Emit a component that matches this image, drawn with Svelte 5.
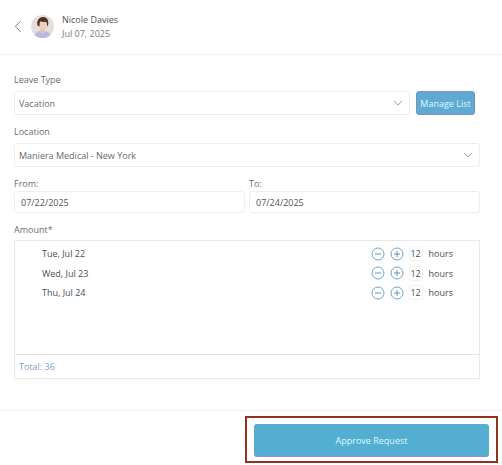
<script>
  const days = ['Tue, Jul 22', 'Wed, Jul 23', 'Thu, Jul 24'];
  const total = 36;
</script>

{#snippet chevron()}
  <svg class="chevron" viewBox="0 0 10 6" width="10" height="6">
    <path d="M1 .8 5 5l4-4.2" fill="none" stroke="#8d9296" stroke-width=".9" />
  </svg>
{/snippet}

<div class="page">
  <header>
    <svg class="back" viewBox="0 0 9 14" width="8" height="13">
      <path d="M7.6 1 1.4 7l6.2 6" fill="none" stroke="#777c80" stroke-width="1.1" />
    </svg>
    <svg class="avatar" viewBox="0 0 24 24" width="23" height="23">
      <defs><clipPath id="round"><circle cx="12" cy="12" r="12" /></clipPath></defs>
      <g clip-path="url(#round)">
        <rect width="24" height="24" fill="#e4dfdb" />
        <path d="M3 24c0-5 4-7.500 9-7.500s9 2.500 9 7.500z" fill="#bdb6e0" />
        <path d="M9.500 13h5v5.500c-1.500 1-3.500 1-5 0z" fill="#e6c4b2" />
        <ellipse cx="12.500" cy="10" rx="4.200" ry="5.500" fill="#edcfbd" />
        <path d="M6.500 10c-.5-5 2.500-8 6-8s6 2.500 5.500 7c-.2 1.500-.8 2.500-1.300 3 .2-2 0-4-1-5-2 .5-4.500.5-6-.5-.7 1.500-1 3.500-.7 5.500-1.300-.3-2.300-1-2.500-2z" fill="#4f3428" />
      </g>
    </svg>
    <div class="who">
      <span class="name">Nicole Davies</span>
      <span class="date">Jul 07, 2025</span>
    </div>
  </header>

  <main>
    <label class="first" for="leave">Leave Type</label>
    <div class="with-button">
      <div class="field grow" id="leave">Vacation {@render chevron()}</div>
      <button class="manage">Manage List</button>
    </div>

    <label for="location">Location</label>
    <div class="field" id="location">Maniera Medical - New York {@render chevron()}</div>

    <div class="dates">
      <div>
        <label for="from">From:</label>
        <div class="field date-field" id="from">07/22/2025</div>
      </div>
      <div>
        <label for="to">To:</label>
        <div class="field date-field" id="to">07/24/2025</div>
      </div>
    </div>

    <label class="amount-label" for="amount">Amount*</label>
    <div class="amount" id="amount">
      <ul>
        {#each days as day}
          <li>
            <span class="day">{day}</span>
            <svg class="step" viewBox="0 0 14 14" width="14" height="14">
              <circle cx="7" cy="7" r="6" fill="none" stroke="#6fa5cf" />
              <path d="M4 7h6" stroke="#6f8fa8" />
            </svg>
            <svg class="step" viewBox="0 0 14 14" width="14" height="14">
              <circle cx="7" cy="7" r="6" fill="none" stroke="#6fa5cf" />
              <path d="M4 7h6M7 4v6" stroke="#6f8fa8" />
            </svg>
            <span class="qty">12</span>
            <span class="unit">hours</span>
          </li>
        {/each}
      </ul>
      <div class="total">Total: {total}</div>
    </div>
  </main>

  <footer>
    <div class="highlight">
      <button class="approve">Approve Request</button>
    </div>
  </footer>
</div>

<style>
  :global(body) {
    background: #fff;
  }

  .page {
    width: 502px;
    height: 465px;
    overflow: hidden;
    font-family: "Open Sans", "Noto Sans", sans-serif;
    font-size: 9px;
    color: #5f6468;
  }

  header {
    height: 55px;
    box-sizing: border-box;
    border-bottom: 1px solid #f1f1f1;
    display: flex;
    align-items: center;
    padding: 0 0 1px 14px;
  }

  .back {
    margin-right: 9px;
  }

  .avatar {
    margin-right: 8px;
  }

  .who {
    display: flex;
    flex-direction: column;
    gap: 3px;
    line-height: 11px;
  }

  .name {
    color: #4d5256;
  }

  .date {
    color: #74797d;
  }

  main {
    padding: 0 22px 0 14px;
  }

  label {
    display: block;
    line-height: 12px;
    margin: 11px 0 5px;
    color: #686d71;
  }

  label.first {
    margin-top: 19px;
  }

  .with-button {
    display: flex;
    gap: 6px;
    padding-right: 5px;
  }

  .grow {
    flex: 1;
  }

  .field {
    height: 24px;
    box-sizing: border-box;
    border: 1px solid #eeeeee;
    border-radius: 3px;
    padding: 0 6px 0 4px;
    display: flex;
    align-items: center;
    justify-content: space-between;
    color: #666b6f;
  }

  .manage {
    width: 59px;
    height: 24px;
    padding: 0;
    border: 1px solid #7b93c4;
    border-radius: 3px;
    background: #5fa9d3;
    color: #dcfbff;
    font: inherit;
  }

  .dates {
    display: grid;
    grid-template-columns: 231px 231px;
    gap: 4px;
  }

  .dates label {
    margin: 11px 0 1px;
  }

  .date-field {
    height: 22px;
    padding-left: 6px;
    color: #505559;
  }

  label.amount-label {
    margin: 11px 0 4px;
  }

  .amount {
    height: 139px;
    box-sizing: border-box;
    border: 1px solid #e9e9e9;
    display: flex;
    flex-direction: column;
  }

  ul {
    flex: 1;
    margin: 0;
    padding: 3px 0 0;
    list-style: none;
  }

  li {
    height: 19.500px;
    display: flex;
    align-items: center;
    padding: 0 26px 0 27px;
    color: #4a4f53;
  }

  .day {
    flex: 1;
  }

  .step {
    margin-right: 5px;
  }

  .qty {
    width: 12px;
    height: 13px;
    margin: 0 6px 0 0;
    border: 1px solid #f3f3f3;
    border-radius: 2px;
    text-align: center;
    line-height: 13px;
  }

  .total {
    height: 24px;
    box-sizing: border-box;
    border-top: 1px solid #e3e3e3;
    padding-left: 4px;
    line-height: 24px;
    color: #7f9fcf;
  }

  footer {
    margin-top: 31px;
    border-top: 1px solid #f1f1f1;
    display: flex;
    justify-content: flex-end;
    padding: 5px 4px 0 0;
  }

  .highlight {
    width: 253px;
    height: 47px;
    box-sizing: border-box;
    border: 2px solid #8f3320;
    padding: 6px 7px;
  }

  .approve {
    width: 100%;
    height: 33px;
    padding: 0;
    border: none;
    border-bottom: 1px solid #b77fc9;
    border-radius: 3px;
    background: #53aed2;
    color: #dcfbff;
    font: inherit;
  }
</style>
